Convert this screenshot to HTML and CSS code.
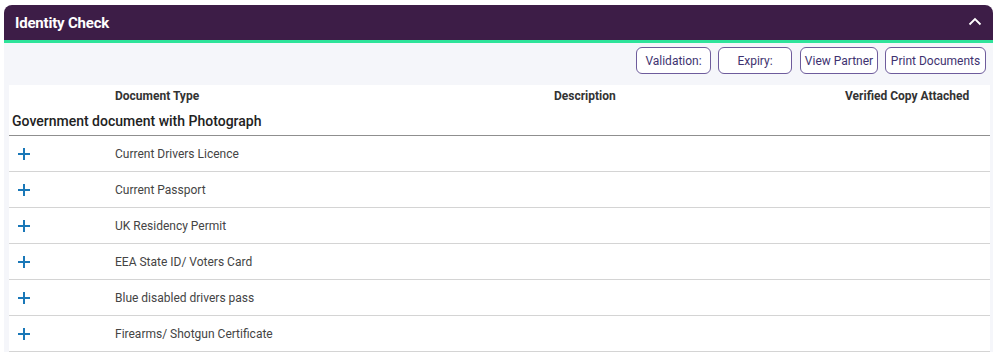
FILE: index.html
```html
<!DOCTYPE html>
<html lang="en">
<head>
    <meta charset="UTF-8">
    <title>Identity Check</title>
    <link rel="stylesheet" href="styles.css">
</head>
<body>

<div class="panel">
    <div class="panel-header">
        <h2>Identity Check</h2>
        <svg class="chevron" width="14" height="9" viewBox="0 0 14 9">
            <path d="M1.5 7.5 L7 2 L12.5 7.5" fill="none" stroke="#fff" stroke-width="1.8"/>
        </svg>
    </div>

    <div class="panel-body">
        <div class="toolbar">
            <button class="outline-btn btn-validation">Validation:</button>
            <button class="outline-btn btn-expiry">Expiry:</button>
            <button class="outline-btn btn-partner">View Partner</button>
            <button class="outline-btn btn-print">Print Documents</button>
        </div>

        <div class="doc-table">
            <!-- Column headings -->
            <div class="doc-row head-row">
                <div></div>
                <div>Document Type</div>
                <div>Description</div>
                <div>Verified Copy Attached</div>
            </div>

            <div class="group-row">Government document with Photograph</div>

            <div class="doc-row item-row">
                <div class="add-cell"><span class="plus"></span></div>
                <div>Current Drivers Licence</div>
                <div></div>
                <div></div>
            </div>
            <div class="doc-row item-row">
                <div class="add-cell"><span class="plus"></span></div>
                <div>Current Passport</div>
                <div></div>
                <div></div>
            </div>
            <div class="doc-row item-row">
                <div class="add-cell"><span class="plus"></span></div>
                <div>UK Residency Permit</div>
                <div></div>
                <div></div>
            </div>
            <div class="doc-row item-row">
                <div class="add-cell"><span class="plus"></span></div>
                <div>EEA State ID/ Voters Card</div>
                <div></div>
                <div></div>
            </div>
            <div class="doc-row item-row">
                <div class="add-cell"><span class="plus"></span></div>
                <div>Blue disabled drivers pass</div>
                <div></div>
                <div></div>
            </div>
            <div class="doc-row item-row">
                <div class="add-cell"><span class="plus"></span></div>
                <div>Firearms/ Shotgun Certificate</div>
                <div></div>
                <div></div>
            </div>
        </div>
    </div>
</div>

</body>
</html>
```

FILE: styles.css
```css
body {
    margin: 0;
    padding: 5px 5px 0 4px;
    font-family: Roboto, "Liberation Sans", sans-serif;
    background-color: #fff;
    color: #333;
}

.panel {
    width: 989px;
    background-color: #f5f6fa;
    border-radius: 8px 8px 0 0;
}

.panel-header {
    height: 35px;
    background-color: #3d1d47;
    border-radius: 8px 8px 0 0;
    border-bottom: 3px solid #2ee39a;
    display: flex;
    align-items: center;
    justify-content: space-between;
    padding: 0 11px 0 11px;
}

.panel-header h2 {
    margin: 0;
    color: #fff;
    font-size: 15px;
    font-weight: 700;
    letter-spacing: -0.2px;
}

.chevron {
    margin-top: -2px;
}

.panel-body {
    padding: 4px 3px 0 5px;
}

.toolbar {
    display: flex;
    justify-content: flex-end;
    gap: 7px;
    padding-right: 4px;
    margin-bottom: 11px;
}

.outline-btn {
    height: 27px;
    padding: 0;
    background-color: #fff;
    border: 1.5px solid #6e5c9c;
    border-radius: 6px;
    color: #3e3270;
    font-family: inherit;
    font-size: 12px;
}

.btn-validation {
    width: 75px;
}

.btn-expiry {
    width: 74px;
    margin-right: 1px;
}

.btn-partner {
    width: 78px;
}

.btn-print {
    width: 101px;
}

.doc-table {
    background-color: #fff;
    width: 981px;
}

.doc-row {
    display: grid;
    grid-template-columns: 100px 439px 291px 1fr;
}

.doc-row > div {
    padding-left: 6px;
}

.head-row {
    height: 22px;
    padding-top: 4px;
    box-sizing: border-box;
    line-height: 15px;
    font-size: 12px;
    font-weight: 700;
    color: #333;
}

.group-row {
    height: 28px;
    line-height: 28px;
    padding-left: 3px;
    font-size: 14px;
    font-weight: 500;
    color: #222;
    border-bottom: 1px solid #8f8f8f;
}

.item-row {
    height: 35px;
    align-items: center;
    font-size: 12px;
    color: #444;
    border-bottom: 1px solid #d4d4d4;
}

.add-cell {
    display: flex;
    align-items: center;
}

.plus {
    position: relative;
    display: inline-block;
    width: 12px;
    height: 12px;
    margin-left: 3px;
}

.plus::before,
.plus::after {
    content: "";
    position: absolute;
    background-color: #1a78b8;
}

.plus::before {
    left: 0;
    top: 5px;
    width: 12px;
    height: 2px;
}

.plus::after {
    left: 5px;
    top: 0;
    width: 2px;
    height: 12px;
}
```
